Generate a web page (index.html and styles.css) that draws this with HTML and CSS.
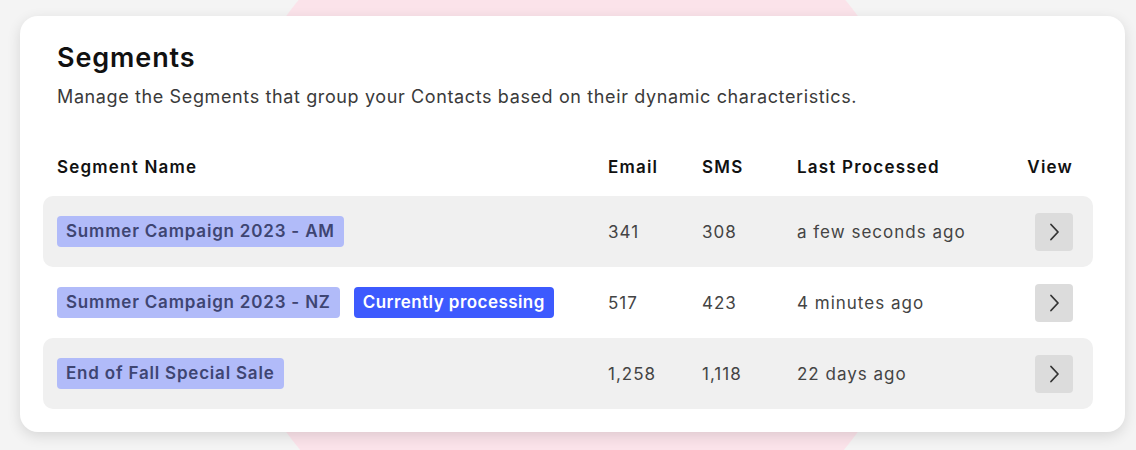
FILE: index.html
```html
<!DOCTYPE html>
<html lang="en">
<head>
<meta charset="utf-8">
<title>Segments</title>
<link rel="stylesheet" href="styles.css">
</head>
<body>
<main class="card">
  <h1 class="title">Segments</h1>
  <p class="subtitle">Manage the Segments that group your Contacts based on their dynamic characteristics.</p>
  <div class="table">
    <div class="row head">
      <div>Segment Name</div>
      <div>Email</div>
      <div>SMS</div>
      <div>Last Processed</div>
      <div class="right">View</div>
    </div>
    <div class="row shaded">
      <div class="name"><span class="badge">Summer Campaign 2023 - AM</span></div>
      <div>341</div>
      <div>308</div>
      <div>a few seconds ago</div>
      <div class="right"><button class="view" aria-label="View"><svg viewBox="0 0 24 24" width="24" height="24"><path d="M9 4.5l7 7.5-7 7.5" fill="none" stroke="#333" stroke-width="1.8" stroke-linecap="round" stroke-linejoin="round"/></svg></button></div>
    </div>
    <div class="row">
      <div class="name"><span class="badge">Summer Campaign 2023 - NZ</span><span class="badge active">Currently processing</span></div>
      <div>517</div>
      <div>423</div>
      <div>4 minutes ago</div>
      <div class="right"><button class="view" aria-label="View"><svg viewBox="0 0 24 24" width="24" height="24"><path d="M9 4.5l7 7.5-7 7.5" fill="none" stroke="#333" stroke-width="1.8" stroke-linecap="round" stroke-linejoin="round"/></svg></button></div>
    </div>
    <div class="row shaded">
      <div class="name"><span class="badge">End of Fall Special Sale</span></div>
      <div>1,258</div>
      <div>1,118</div>
      <div>22 days ago</div>
      <div class="right"><button class="view" aria-label="View"><svg viewBox="0 0 24 24" width="24" height="24"><path d="M9 4.5l7 7.5-7 7.5" fill="none" stroke="#333" stroke-width="1.8" stroke-linecap="round" stroke-linejoin="round"/></svg></button></div>
    </div>
  </div>
</main>
</body>
</html>
```
FILE: styles.css
```css
html, body {
  margin: 0;
  height: 100%;
}
body {
  font-family: Inter, "Noto Sans", sans-serif;
  background: radial-gradient(circle 354px at 572px 224px, #fbe3ea 99.7%, #f4f4f4 100%);
  background-color: #f4f4f4;
  padding: 16px 0 0 20px;
  box-sizing: border-box;
  overflow: hidden;
}
.card {
  width: 1105px;
  height: 416px;
  box-sizing: border-box;
  background: #fff;
  border-radius: 18px;
  box-shadow: 0 4px 14px rgba(0, 0, 0, 0.12);
  padding: 25px 32px 0 23px;
}
.title {
  margin: 0 0 0 14px;
  font-size: 27px;
  font-weight: 600;
  line-height: 34px;
  letter-spacing: 0.9px;
  color: #111;
}
.subtitle {
  margin: 10px 0 0 14px;
  font-size: 18px;
  line-height: 24px;
  letter-spacing: 0.62px;
  color: #3a3a3a;
}
.table {
  margin-top: 29px;
}
.row {
  display: grid;
  grid-template-columns: 551px 94px 95px 230px 1fr;
  align-items: center;
  height: 71px;
  padding: 0 20px 0 14px;
  border-radius: 10px;
  font-size: 17px;
  letter-spacing: 1px;
  color: #444;
}
.row.head {
  height: 58px;
  font-weight: 600;
  letter-spacing: 1.2px;
  color: #111;
}
.row.shaded {
  background: #f0f0f0;
}
.right {
  display: flex;
  justify-content: flex-end;
}
.name {
  display: flex;
  gap: 14px;
}
.badge {
  display: inline-block;
  padding: 0 9px;
  height: 31px;
  line-height: 31px;
  border-radius: 4px;
  background: #b1bbf9;
  color: #3e4572;
  font-weight: 600;
  font-size: 17px;
  letter-spacing: 0.8px;
}
.badge.active {
  background: #3d5afe;
  color: #fff;
  letter-spacing: 0.45px;
}
.view {
  width: 38px;
  height: 38px;
  border: 0;
  border-radius: 4px;
  background: #dcdcdc;
  padding: 0;
  display: flex;
  align-items: center;
  justify-content: center;
}
```
